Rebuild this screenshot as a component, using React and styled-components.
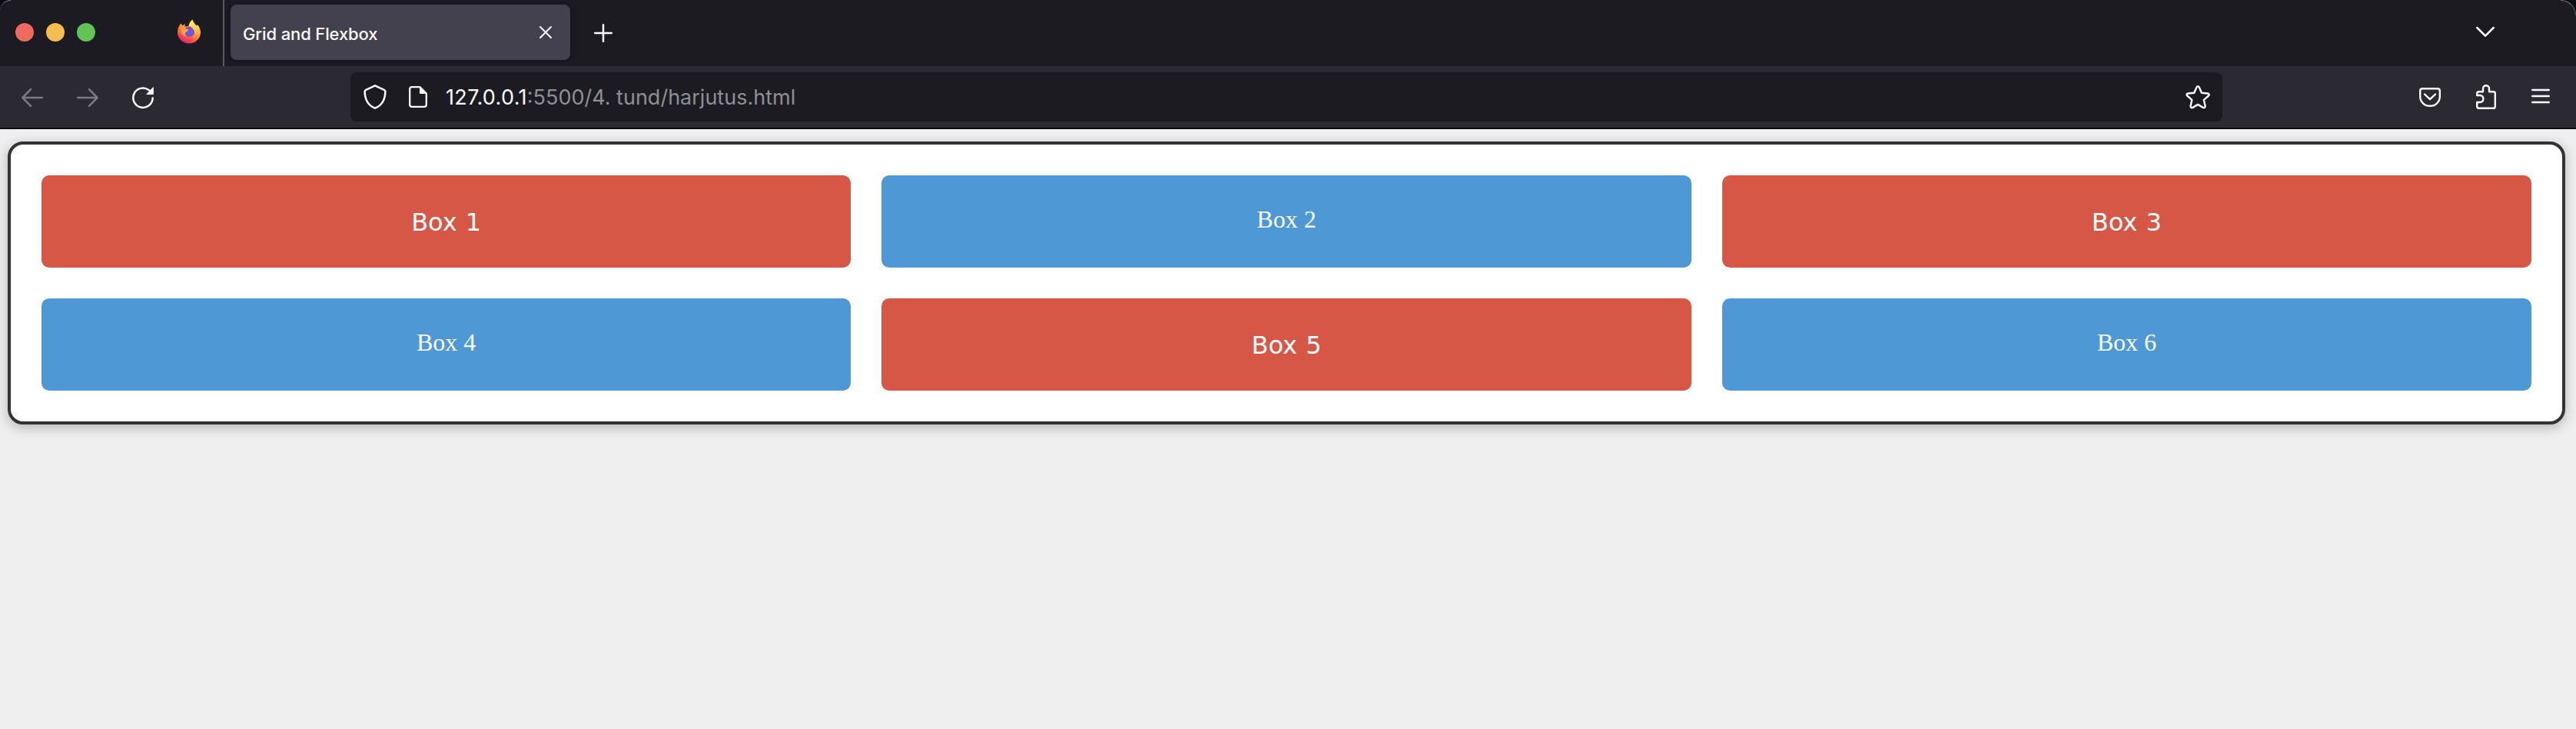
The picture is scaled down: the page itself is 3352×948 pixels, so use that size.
import React from "react";
import styled, { createGlobalStyle } from "styled-components";

const GlobalStyle = createGlobalStyle`
  *, *::before, *::after { box-sizing: border-box; }
  html, body { margin: 0; padding: 0; background: #efefef; }
`;

const Window = styled.div`
  display: flex;
  flex-direction: column;
  width: 3352px;
  height: 948px;
  overflow: hidden;
  background: #efefef;
`;

const TitleCorners = styled.div`
  flex: none;
  background: #0b0d14;
`;

const TitleBar = styled.header`
  position: relative;
  display: flex;
  height: 86px;
  background: #1c1b22;
  border-radius: 14px 20px 0 0;

  /* light rim on the rounded window corners */
  &::before,
  &::after {
    content: "";
    position: absolute;
    top: 0;
  }
  &::before {
    left: 0;
    width: 14px;
    height: 14px;
    border-top: 1px solid #77767b;
    border-top-left-radius: 14px;
  }
  &::after {
    right: 0;
    width: 20px;
    height: 20px;
    border-top: 1px solid #77767b;
    border-right: 1px solid #55545a;
    border-top-right-radius: 20px;
  }
`;

const TrafficLights = styled.div`
  display: flex;
  gap: 16px;
  padding: 30px 0 0 20px;
`;

const Light = styled.span`
  width: 24px;
  height: 24px;
  border-radius: 50%;
  background: ${(p) => p.$color};
`;

const PinnedTab = styled.div`
  width: 168px;
  padding: 25px 0 0 107px;
  border-right: 2px solid #5b5a60;
`;

const Tab = styled.div`
  display: flex;
  align-items: center;
  justify-content: space-between;
  width: 442px;
  height: 72px;
  margin: 6px 0 0 8px;
  padding: 0 24px 0 16px;
  border-radius: 8px;
  background: #42414d;
  box-shadow: 0 0 6px rgba(0, 0, 0, 0.45);
`;

const TabTitle = styled.span`
  padding-top: 4px;
  font: 500 22px/30px Inter, "Liberation Sans", sans-serif;
  letter-spacing: -0.12px;
  color: #fbfbfe;
  white-space: nowrap;
`;

const NewTab = styled.div`
  padding: 31px 0 0 31px;
`;

const ListTabs = styled.div`
  margin-left: auto;
  padding: 34px 106px 0 0;
`;

const Icon = styled.svg`
  display: block;
  flex: none;
  overflow: visible;
  fill: none;
  stroke: ${(p) => p.$color || "#fbfbfe"};
  stroke-width: ${(p) => p.$weight || 2.3};
  stroke-linecap: round;
  stroke-linejoin: round;
`;

const Logo = styled.svg`
  display: block;
`;

const NavBar = styled.nav`
  display: flex;
  align-items: center;
  justify-content: space-between;
  height: 82px;
  flex: none;
  padding: 0 34px 0 28px;
  background: #2b2a33;
  border-bottom: 2px solid #0c0c0d;
`;

const NavButtons = styled.div`
  display: flex;
  align-items: center;
  gap: 44px;
  width: 428px;
  padding-top: 2px;
`;

const UrlBar = styled.div`
  display: flex;
  align-items: center;
  width: 2436px;
  height: 64px;
  padding: 0 16px 0 17px;
  border-radius: 8px;
  background: #1c1b22;
`;

const FileIcon = styled(Icon)`
  margin: 0 24px 0 29px;
`;

const Url = styled.span`
  flex: 1;
  padding-top: 2px;
  font: 400 27px/36px Inter, "Liberation Sans", sans-serif;
  color: #8f8f94;
  white-space: pre;
`;

const Host = styled.span`
  letter-spacing: 0.35px;
  color: #fbfbfe;
`;

const Tools = styled.div`
  display: flex;
  align-items: center;
  justify-content: space-between;
  width: 170px;
  margin-left: 256px;
`;

const MenuIcon = styled(Icon)`
  margin-bottom: 2px;
`;

const Page = styled.main`
  flex: 1;
  padding: 16px 14px 0 10px;
`;

const Grid = styled.section`
  display: grid;
  grid-template-columns: repeat(3, 1fr);
  gap: 40px;
  padding: 40px;
  border: 4px solid #333;
  border-radius: 20px;
  background: #fff;
  box-shadow: 0 4px 16px rgba(0, 0, 0, 0.25);
`;

const Box = styled.div`
  height: 120px;
  padding: 40px;
  border-radius: 10px;
  color: #fff;
  text-align: center;
  font-size: 32px;
`;

const RedBox = styled(Box)`
  background: #d65745;
  font-family: "DejaVu Sans", sans-serif;
  line-height: 43px;
  word-spacing: 1px;
`;

const BlueBox = styled(Box)`
  background: #4e98d6;
  font-family: "Liberation Serif", serif;
  line-height: 34px;
`;

const FirefoxLogo = () => (
  <Logo width="30" height="32" viewBox="0 0 30 32">
    <defs>
      <linearGradient id="flame" x1="0.85" y1="0.1" x2="0.35" y2="1">
        <stop offset="0" stopColor="#ffe75a" />
        <stop offset="0.4" stopColor="#ffa43a" />
        <stop offset="0.7" stopColor="#ff5f3c" />
        <stop offset="1" stopColor="#e0207f" />
      </linearGradient>
      <radialGradient id="globe" cx="0.5" cy="0.65" r="0.65">
        <stop offset="0" stopColor="#5f62e6" />
        <stop offset="1" stopColor="#8a3fd0" />
      </radialGradient>
      <linearGradient id="tail" x1="0.4" y1="0" x2="0.6" y2="1">
        <stop offset="0" stopColor="#fff36a" />
        <stop offset="0.5" stopColor="#ffcf45" />
        <stop offset="1" stopColor="#ff8a3a" stopOpacity="0" />
      </linearGradient>
    </defs>
    <path fill="url(#flame)" d="M4.500 5.500L6.500 8.500L9.500 6V9.500L14.500 9C15 5.500 17 2.500 19.500 0.500C20 4 22.500 5.500 24.500 8.500L26 7.500C28.500 10 30 13.500 30 17C30 25 23.500 31.500 15 31.500S0 25 0 17C0 12.500 1.500 8.500 4.500 5.500Z" />
    <circle cx="15.500" cy="16.200" r="6.800" fill="url(#globe)" />
    <path fill="url(#tail)" d="M14.500 8.500C15 5.500 17 2.500 19.500 0.500C20 4 22.500 5.500 24.500 8.500L26 7.500C30 13 29.500 20 25.500 24.500C23.500 26.500 21 26 19.500 23.500C24 20 22.500 11.500 14.500 8.500Z" />
    <path fill="#ffa338" d="M4 13.500C7 11 10 12 14.500 13.500C14 15.800 11.500 15.800 10.500 17C9.500 19 10 21 12 23C7.500 22 4.500 18 4 13.500Z" />
  </Logo>
);

const boxes = ["Box 1", "Box 2", "Box 3", "Box 4", "Box 5", "Box 6"];

export default function App() {
  return (
    <>
      <GlobalStyle />
      <Window>
        <TitleCorners>
          <TitleBar>
            <TrafficLights>
              <Light $color="#ed6a5e" />
              <Light $color="#f5bd4f" />
              <Light $color="#61c454" />
            </TrafficLights>
            <PinnedTab>
              <FirefoxLogo />
            </PinnedTab>
            <Tab>
              <TabTitle>Grid and Flexbox</TabTitle>
              <Icon width="16" height="16" viewBox="0 0 16 16" $weight={2}>
                <path d="M1 1L15 15M15 1L1 15" />
              </Icon>
            </Tab>
            <NewTab>
              <Icon width="24" height="24" viewBox="0 0 24 24" $weight={2.5}>
                <path d="M12 1.200V22.800M1.200 12H22.800" />
              </Icon>
            </NewTab>
            <ListTabs>
              <Icon width="24" height="14" viewBox="0 0 24 14" $weight={2.5}>
                <path d="M1.300 2L12 12.700L22.700 2" />
              </Icon>
            </ListTabs>
          </TitleBar>
        </TitleCorners>
        <NavBar>
          <NavButtons>
            <Icon width="28" height="24" viewBox="0 0 28 24" $color="#7c7b82" $weight={2.5}>
              <path d="M12 1.200L1.400 12L12 22.800M1.400 12H26.800" />
            </Icon>
            <Icon width="28" height="24" viewBox="0 0 28 24" $color="#7c7b82" $weight={2.5}>
              <path d="M16 1.200L26.600 12L16 22.800M26.600 12H1.200" />
            </Icon>
            <Icon width="28" height="28" viewBox="0 0 28 28" $weight={2.5}>
              <path d="M26.700 14.500A12.700 12.700 0 1 1 21.500 3.900L24 6" />
              <path d="M27.300 1V9.500H19.200Z" fill="#fbfbfe" strokeWidth="1" />
            </Icon>
          </NavButtons>
          <UrlBar>
            <Icon width="30" height="32" viewBox="0 0 30 32" $weight={2.5}>
              <path d="M15 1.300L26.800 6.800Q28.500 7.600 28.400 9.500C28 19 24.500 27 15 30.700C5.500 27 2 19 1.600 9.500Q1.500 7.600 3.200 6.800Z" />
            </Icon>
            <FileIcon width="24" height="28" viewBox="0 0 24 28" $weight={2.3}>
              <path d="M14.500 1.200H4Q1.200 1.200 1.200 4V24Q1.200 26.800 4 26.800H20Q22.800 26.800 22.800 24V9.500Z" />
              <path d="M14.500 1.200V9.500H22.800Z" fill="#fbfbfe" strokeWidth="1" />
            </FileIcon>
            <Url><Host>127.0.0.1</Host>:5500/4. tund/harjutus.html</Url>
            <Icon width="32" height="31" viewBox="0 0 32 31" $weight={2.4}>
              <path d="M14.300 2.500Q16 0 17.700 2.500L20.900 9.700L28.800 10.500Q31.800 11.100 29.900 13.500L23.800 18.900L25.500 26.800Q25.600 29.900 22.700 28.900L16 24.900L9.300 28.900Q6.400 29.900 6.500 26.800L8.200 18.900L2.100 13.500Q.2 11.100 3.200 10.500L11.100 9.700Z" />
            </Icon>
          </UrlBar>
          <Tools>
            <Icon width="28" height="25" viewBox="0 0 28 25" $weight={2.4}>
              <path d="M4 1.200H24Q26.800 1.200 26.800 4V11.500C26.800 18.500 21 23.800 14 23.800S1.200 18.500 1.200 11.500V4Q1.200 1.200 4 1.200ZM7 8.500L14 15.200L21 8.500" />
            </Icon>
            <Icon width="26" height="32" viewBox="0 0 26 32" $weight={2.4}>
              <path d="M1.200 14V11.500Q1.200 9.200 3.500 9.200H9V5C9 0 17 0 17 5V9.200H22.500Q24.800 9.200 24.800 11.500V28.500Q24.800 30.800 22.500 30.800H3.500Q1.200 30.800 1.200 28.500V23H5C10.800 23 10.800 14 5 14Z" />
            </Icon>
            <MenuIcon width="24" height="20" viewBox="0 0 24 20" $weight={2.5}>
              <path d="M1.300 2H22.700M1.300 10H22.700M1.300 18H22.700" />
            </MenuIcon>
          </Tools>
        </NavBar>
        <Page>
          <Grid>
            {boxes.map((label, i) =>
              i % 2 === 0 ? <RedBox key={label}>{label}</RedBox> : <BlueBox key={label}>{label}</BlueBox>
            )}
          </Grid>
        </Page>
      </Window>
    </>
  );
}
